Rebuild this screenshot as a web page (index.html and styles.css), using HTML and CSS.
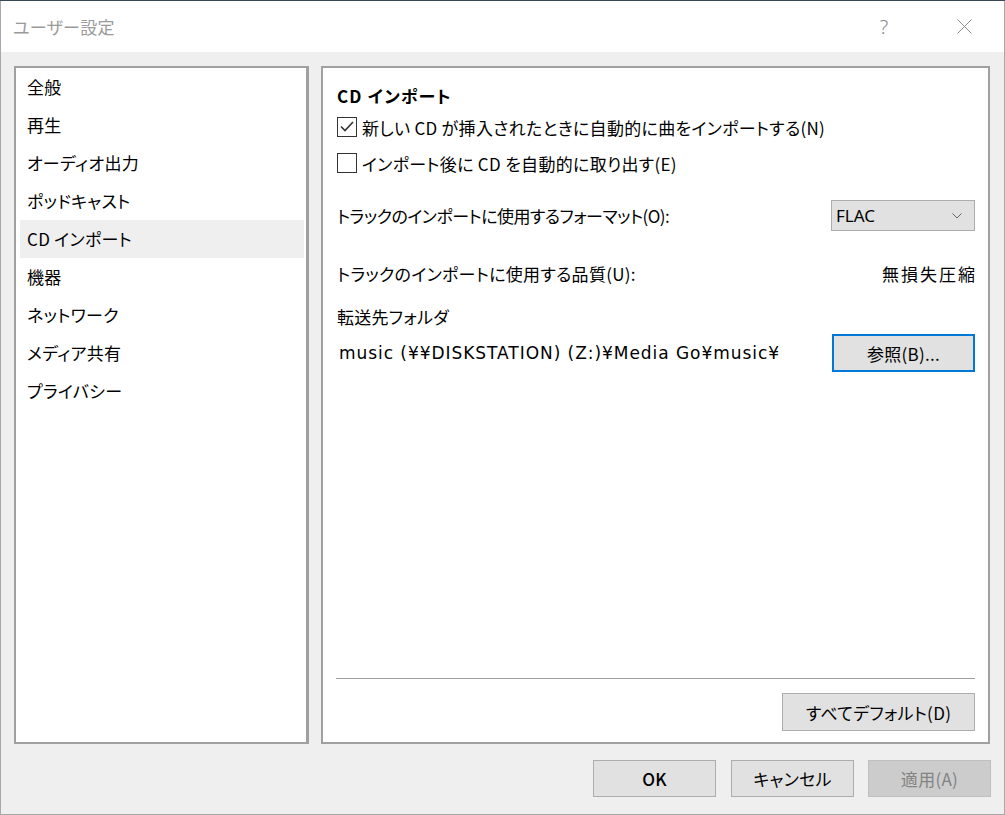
FILE: index.html
```html
<!DOCTYPE html>
<html lang="ja">
<head>
  <meta charset="UTF-8" />
  <title>ユーザー設定</title>
  <link rel="stylesheet" href="styles.css">
</head>
<body>
  <div class="window">
    <div class="titlebar">
      <div class="title">ユーザー設定</div>
      <div class="title-btn help">?</div>
      <div class="title-btn close">
        <svg width="15" height="15" viewBox="0 0 15 15"><path d="M0.5 0.5 L14.5 14.5 M14.5 0.5 L0.5 14.5" stroke="#8a8a8a" stroke-width="1" fill="none"/></svg>
      </div>
    </div>

    <div class="content">
      <div class="main">
        <ul class="side-list">
          <li>全般</li>
          <li>再生</li>
          <li>オーディオ出力</li>
          <li>ポッドキャスト</li>
          <li class="selected">CD インポート</li>
          <li>機器</li>
          <li>ネットワーク</li>
          <li>メディア共有</li>
          <li>プライバシー</li>
        </ul>

        <div class="panel">
          <div class="panel-title">CD インポート</div>

          <label class="check-row first">
            <span class="checkbox">
              <svg width="14" height="11" viewBox="0 0 14 11"><path d="M1 5.5 L5 9.5 L13 1" stroke="#333" stroke-width="1.6" fill="none"/></svg>
            </span>
            新しい&nbsp;CD&nbsp;が挿入されたときに自動的に曲をインポートする(N)
          </label>
          <label class="check-row">
            <span class="checkbox"></span>
            インポート後に&nbsp;CD&nbsp;を自動的に取り出す(E)
          </label>

          <div class="field-row format-row">
            <span class="format-label">トラックのインポートに使用するフォーマット(O):</span>
            <div class="combo">
              <span>FLAC</span>
              <svg width="10" height="6" viewBox="0 0 10 6"><path d="M0.5 0.5 L5 5 L9.5 0.5" stroke="#666" stroke-width="1" fill="none"/></svg>
            </div>
          </div>

          <div class="field-row quality-row">
            <span>トラックのインポートに使用する品質(U):</span>
            <span class="quality">無損失圧縮</span>
          </div>

          <div class="folder-label">転送先フォルダ</div>
          <div class="field-row path-row">
            <span class="path">music (¥¥DISKSTATION) (Z:)¥Media Go¥music¥</span>
            <button class="btn browse">参照(B)...</button>
          </div>

          <div class="spacer"></div>
          <div class="separator"></div>
          <div class="panel-foot">
            <button class="btn default-btn">すべてデフォルト(D)</button>
          </div>
        </div>
      </div>

      <div class="footer">
        <button class="btn dlg-btn ok">OK</button>
        <button class="btn dlg-btn">キャンセル</button>
        <button class="btn dlg-btn disabled">適用(A)</button>
      </div>
    </div>
  </div>
</body>
</html>
```

FILE: styles.css
```css
body {
  margin: 0;
  background-color: #3a4856;
  font-family: "Noto Sans CJK JP", "Noto Sans", sans-serif;
  font-feature-settings: "palt";
  color: #000;
  overflow: hidden;
}

.window {
  margin-top: 1px;
  width: 1003px;
  height: 813px;
  border-left: 1px solid #a8a8a8;
  border-right: 1px solid #a8a8a8;
  border-bottom: 1px solid #a8a8a8;
  background-color: #efefef;
  display: flex;
  flex-direction: column;
}

.titlebar {
  height: 51px;
  background-color: #fff;
  display: flex;
  align-items: center;
}

.title {
  flex: 1;
  padding-left: 12px;
  font-size: 17px;
  color: #9a9a9a;
  letter-spacing: 0.3px;
}

.title-btn {
  display: flex;
  align-items: center;
  justify-content: center;
}

.help {
  width: 30px;
  margin-right: 58px;
  font-family: "Noto Sans", sans-serif;
  font-weight: 300;
  font-size: 20px;
  color: #8a8a8a;
}

.close {
  width: 15px;
  margin-right: 32px;
}

.content {
  flex: 1;
  padding: 14px 13px 0 13px;
  display: flex;
  flex-direction: column;
}

.main {
  display: flex;
  gap: 12px;
  height: 678px;
}

.side-list {
  list-style: none;
  margin: 0;
  padding: 0 2px 0 4px;
  width: 295px;
  box-sizing: border-box;
  background-color: #fff;
  border: 2px solid #a0a0a0;
  border-right-width: 3px;
}

.side-list li {
  height: 38px;
  line-height: 38px;
  padding-left: 7px;
  font-size: 17px;
  letter-spacing: 0.3px;
}

.side-list li.selected {
  background-color: #efefef;
}

.panel {
  width: 669px;
  box-sizing: border-box;
  background-color: #fff;
  border: 2px solid #a0a0a0;
  padding: 0 13px 11px 14px;
  display: flex;
  flex-direction: column;
  font-size: 17px;
  letter-spacing: 0.3px;
}

.panel-title {
  margin-top: 16px;
  height: 24px;
  line-height: 24px;
  font-weight: bold;
  letter-spacing: 1.2px;
}

.check-row {
  height: 36px;
  display: flex;
  align-items: center;
  gap: 5px;
}

.check-row.first {
  margin-top: 1px;
}

.checkbox {
  width: 18px;
  height: 18px;
  border: 1px solid #333;
  display: flex;
  align-items: center;
  justify-content: center;
  margin-top: -1px;
}

.field-row {
  display: flex;
  align-items: center;
  justify-content: space-between;
}

.format-row {
  margin-top: 19px;
  height: 31px;
}

.format-label {
  letter-spacing: -0.5px;
}

.combo {
  width: 144px;
  height: 31px;
  box-sizing: border-box;
  border: 1px solid #adadad;
  background-color: #e1e1e1;
  display: flex;
  align-items: center;
  justify-content: space-between;
  padding: 0 12px 0 4px;
  font-family: "Noto Sans", "Noto Sans CJK JP", sans-serif;
  letter-spacing: 0;
}

.quality-row {
  margin-top: 30px;
  height: 24px;
}

.quality {
  letter-spacing: 2px;
  margin-right: -2px;
}

.folder-label {
  margin-top: 20px;
  height: 24px;
  line-height: 24px;
}

.path-row {
  margin-top: 5px;
  height: 38px;
}

.path {
  padding-left: 2px;
  font-family: "DejaVu Sans", "Noto Sans CJK JP", sans-serif;
  font-size: 17px;
  letter-spacing: 0.95px;
}

.btn {
  box-sizing: border-box;
  font-family: "Noto Sans CJK JP", "Noto Sans", sans-serif;
  font-feature-settings: "palt";
  font-size: 17px;
  letter-spacing: 0.3px;
  color: #000;
  background-color: #e1e1e1;
  border: 1px solid #adadad;
  padding: 0;
}

.browse {
  width: 143px;
  height: 38px;
  border: 2px solid #0078d7;
}

.spacer {
  flex: 1;
}

.separator {
  height: 1px;
  background-color: #a0a0a0;
  margin-left: -1px;
}

.panel-foot {
  display: flex;
  justify-content: flex-end;
  margin-top: 14px;
}

.default-btn {
  width: 193px;
  height: 38px;
}

.footer {
  display: flex;
  justify-content: flex-end;
  gap: 15px;
  margin-top: 16px;
}

.dlg-btn {
  width: 123px;
  height: 37px;
}

.dlg-btn.ok {
  font-weight: 500;
}

.dlg-btn.disabled {
  margin-left: -1px;
  background-color: #cccccc;
  border-color: #bfbfbf;
  color: #838383;
}
```
